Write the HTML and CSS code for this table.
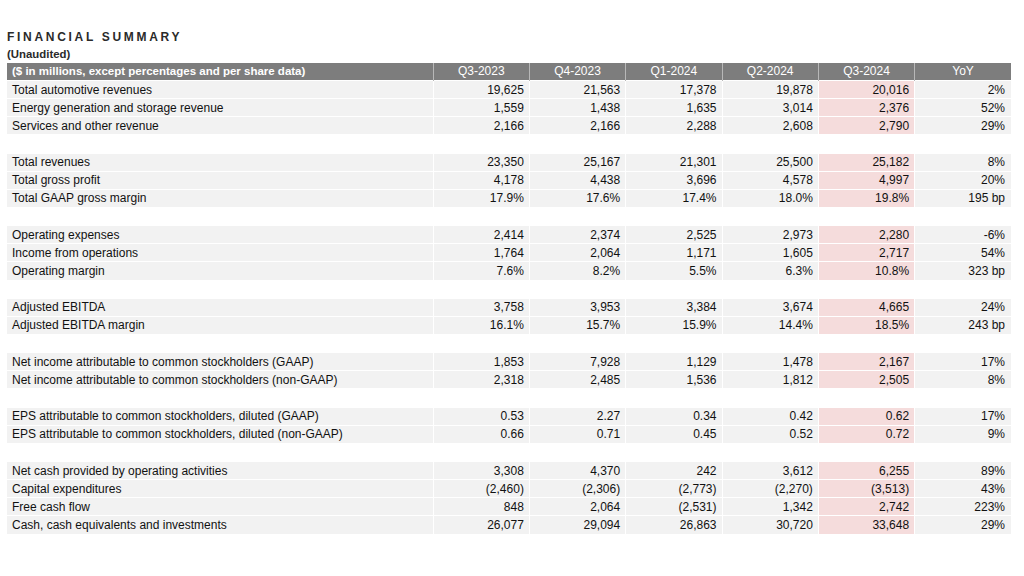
FILE: index.html
```html
<!DOCTYPE html>
<html lang="en">
<head>
<meta charset="utf-8">
<title>Financial Summary</title>
<link rel="stylesheet" href="styles.css">
</head>
<body>
<div class="page">
  <h1 class="title">FINANCIAL SUMMARY</h1>
  <div class="subtitle">(Unaudited)</div>
  <table class="fin">
    <colgroup>
      <col class="c-label">
      <col class="c-num"><col class="c-num"><col class="c-num"><col class="c-num"><col class="c-num"><col class="c-num">
    </colgroup>
    <thead>
      <tr>
        <th class="lbl">($ in millions, except percentages and per share data)</th>
        <th>Q3-2023</th><th>Q4-2023</th><th>Q1-2024</th><th>Q2-2024</th><th>Q3-2024</th><th>YoY</th>
      </tr>
    </thead>
    <tbody>
      <tr><td>Total automotive revenues</td><td>19,625</td><td>21,563</td><td>17,378</td><td>19,878</td><td class="hl">20,016</td><td>2%</td></tr>
      <tr><td>Energy generation and storage revenue</td><td>1,559</td><td>1,438</td><td>1,635</td><td>3,014</td><td class="hl">2,376</td><td>52%</td></tr>
      <tr><td>Services and other revenue</td><td>2,166</td><td>2,166</td><td>2,288</td><td>2,608</td><td class="hl">2,790</td><td>29%</td></tr>
      <tr class="gap"><td colspan="7"></td></tr>
      <tr><td>Total revenues</td><td>23,350</td><td>25,167</td><td>21,301</td><td>25,500</td><td class="hl">25,182</td><td>8%</td></tr>
      <tr><td>Total gross profit</td><td>4,178</td><td>4,438</td><td>3,696</td><td>4,578</td><td class="hl">4,997</td><td>20%</td></tr>
      <tr><td>Total GAAP gross margin</td><td>17.9%</td><td>17.6%</td><td>17.4%</td><td>18.0%</td><td class="hl">19.8%</td><td>195 bp</td></tr>
      <tr class="gap"><td colspan="7"></td></tr>
      <tr><td>Operating expenses</td><td>2,414</td><td>2,374</td><td>2,525</td><td>2,973</td><td class="hl">2,280</td><td>-6%</td></tr>
      <tr><td>Income from operations</td><td>1,764</td><td>2,064</td><td>1,171</td><td>1,605</td><td class="hl">2,717</td><td>54%</td></tr>
      <tr><td>Operating margin</td><td>7.6%</td><td>8.2%</td><td>5.5%</td><td>6.3%</td><td class="hl">10.8%</td><td>323 bp</td></tr>
      <tr class="gap"><td colspan="7"></td></tr>
      <tr><td>Adjusted EBITDA</td><td>3,758</td><td>3,953</td><td>3,384</td><td>3,674</td><td class="hl">4,665</td><td>24%</td></tr>
      <tr><td>Adjusted EBITDA margin</td><td>16.1%</td><td>15.7%</td><td>15.9%</td><td>14.4%</td><td class="hl">18.5%</td><td>243 bp</td></tr>
      <tr class="gap"><td colspan="7"></td></tr>
      <tr><td>Net income attributable to common stockholders (GAAP)</td><td>1,853</td><td>7,928</td><td>1,129</td><td>1,478</td><td class="hl">2,167</td><td>17%</td></tr>
      <tr><td>Net income attributable to common stockholders (non-GAAP)</td><td>2,318</td><td>2,485</td><td>1,536</td><td>1,812</td><td class="hl">2,505</td><td>8%</td></tr>
      <tr class="gap"><td colspan="7"></td></tr>
      <tr><td>EPS attributable to common stockholders, diluted (GAAP)</td><td>0.53</td><td>2.27</td><td>0.34</td><td>0.42</td><td class="hl">0.62</td><td>17%</td></tr>
      <tr><td>EPS attributable to common stockholders, diluted (non-GAAP)</td><td>0.66</td><td>0.71</td><td>0.45</td><td>0.52</td><td class="hl">0.72</td><td>9%</td></tr>
      <tr class="gap"><td colspan="7"></td></tr>
      <tr><td>Net cash provided by operating activities</td><td>3,308</td><td>4,370</td><td>242</td><td>3,612</td><td class="hl">6,255</td><td>89%</td></tr>
      <tr><td>Capital expenditures</td><td>(2,460)</td><td>(2,306)</td><td>(2,773)</td><td>(2,270)</td><td class="hl">(3,513)</td><td>43%</td></tr>
      <tr><td>Free cash flow</td><td>848</td><td>2,064</td><td>(2,531)</td><td>1,342</td><td class="hl">2,742</td><td>223%</td></tr>
      <tr><td>Cash, cash equivalents and investments</td><td>26,077</td><td>29,094</td><td>26,863</td><td>30,720</td><td class="hl">33,648</td><td>29%</td></tr>
    </tbody>
  </table>
</div>
</body>
</html>
```

FILE: styles.css
```css
html, body {
  margin: 0;
  padding: 0;
  background: #ffffff;
}

.page {
  padding: 30px 7px 0 7px;
  font-family: "Liberation Sans", Arial, sans-serif;
  color: #111111;
}

.title {
  margin: 0;
  font-size: 12px;
  line-height: 14px;
  font-weight: 700;
  letter-spacing: 2.7px;
  color: #2a2a2a;
}

.subtitle {
  margin-top: 3px;
  font-size: 11.4px;
  line-height: 14px;
  font-weight: 700;
  color: #2a2a2a;
}

.fin {
  margin-top: 2px;
  width: 1004px;
  table-layout: fixed;
  border-collapse: collapse;
  font-size: 12px;
}

.c-label { width: 426px; }
.c-num { width: 96.3px; }

.fin th {
  height: 17px;
  padding: 0 5px;
  background: #7d7d7d;
  color: #ffffff;
  font-weight: 400;
  text-align: center;
  border-left: 1px solid #b8b8b8;
  line-height: 17px;
}

.fin th.lbl {
  text-align: left;
  font-weight: 700;
  font-size: 11.5px;
  border-left: none;
}

.fin td {
  height: 16.15px;
  padding: 1px 5px 0 5px;
  background: #f2f2f2;
  text-align: right;
  white-space: nowrap;
  border: 1px solid #ffffff;
  line-height: 15px;
}

.fin td:first-child {
  text-align: left;
  border-left: none;
}

.fin td:last-child {
  border-right: none;
  padding-right: 6px;
}

.fin td.hl {
  background: #f5dcdc;
}

.fin tr.gap td {
  background: #ffffff;
}
```
